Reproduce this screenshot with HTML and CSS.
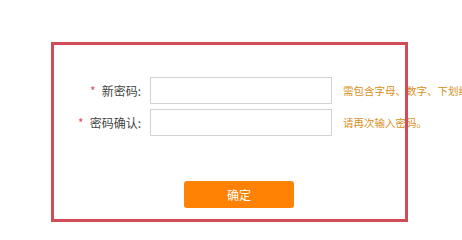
FILE: index.html
```html
<!DOCTYPE html>
<html lang="zh-CN">
<head>
<meta charset="utf-8">
<title>修改密码</title>
<link rel="stylesheet" href="styles.css">
</head>
<body>
<div class="page">
  <form class="pwd-form">
    <div class="row">
      <label class="label"><span class="req">*</span>新密码:</label>
      <input class="field" type="password">
      <span class="hint">需包含字母、数字、下划线</span>
    </div>
    <div class="row">
      <label class="label"><span class="req">*</span>密码确认:</label>
      <input class="field" type="password">
      <span class="hint">请再次输入密码。</span>
    </div>
    <div class="actions">
      <button class="submit" type="button">确定</button>
    </div>
  </form>
  <div class="highlight"></div>
</div>
</body>
</html>
```
FILE: styles.css
```css
html, body {
  margin: 0;
  padding: 0;
  background: #ffffff;
}
body {
  font-family: "Noto Sans CJK SC", "Noto Sans", sans-serif;
  font-size: 12px;
  color: #444444;
}
.page {
  position: relative;
  width: 462px;
  height: 237px;
  overflow: hidden;
}
.pwd-form {
  padding-top: 77px;
  display: flex;
  flex-direction: column;
  gap: 5px;
}
.row {
  display: flex;
  align-items: center;
  height: 27px;
  white-space: nowrap;
}
.label {
  width: 141px;
  text-align: right;
  flex: none;
  line-height: 27px;
}
.req {
  color: #e5505c;
  margin-right: 6px;
}
.field {
  flex: none;
  box-sizing: border-box;
  width: 182px;
  height: 27px;
  margin: 0 0 0 9px;
  border: 1px solid #d2d2d2;
  background: #ffffff;
  padding: 0 6px;
  outline: none;
}
.hint {
  margin-left: 11px;
  font-size: 10.5px;
  color: #d98f22;
}
.actions {
  margin-top: 40px;
  padding-left: 184px;
}
.submit {
  width: 110px;
  height: 27px;
  border: none;
  border-radius: 3px;
  background: #ff8205;
  color: #ffffff;
  font-family: inherit;
  font-size: 12px;
  padding: 0;
  cursor: pointer;
}
.highlight {
  position: absolute;
  left: 51px;
  top: 42px;
  width: 357px;
  height: 180px;
  box-sizing: border-box;
  border: 3px solid #d24c58;
  pointer-events: none;
}
```
